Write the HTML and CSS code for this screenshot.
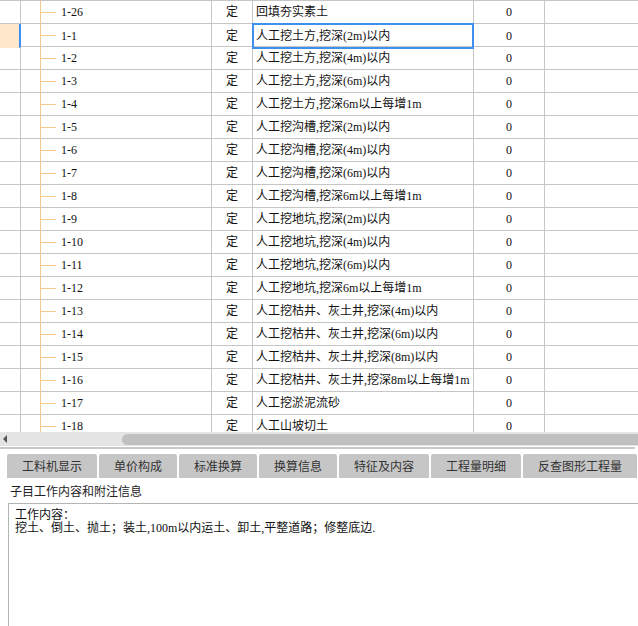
FILE: index.html
```html
<!DOCTYPE html>
<html lang="zh-CN">
<head>
<meta charset="utf-8">
<title>定额</title>
<link rel="stylesheet" href="styles.css">
</head>
<body>
<div class="grid">
  <div class="row"><div class="c0"></div><div class="c1 tree">1-26</div><div class="c2">定</div><div class="c3">回填夯实素土</div><div class="c4">0</div><div class="c5"></div></div>
  <div class="row sel"><div class="c0"></div><div class="c1 tree">1-1</div><div class="c2">定</div><div class="c3 focus">人工挖土方,挖深(2m)以内</div><div class="c4">0</div><div class="c5"></div></div>
  <div class="row"><div class="c0"></div><div class="c1 tree">1-2</div><div class="c2">定</div><div class="c3">人工挖土方,挖深(4m)以内</div><div class="c4">0</div><div class="c5"></div></div>
  <div class="row"><div class="c0"></div><div class="c1 tree">1-3</div><div class="c2">定</div><div class="c3">人工挖土方,挖深(6m)以内</div><div class="c4">0</div><div class="c5"></div></div>
  <div class="row"><div class="c0"></div><div class="c1 tree">1-4</div><div class="c2">定</div><div class="c3">人工挖土方,挖深6m以上每增1m</div><div class="c4">0</div><div class="c5"></div></div>
  <div class="row"><div class="c0"></div><div class="c1 tree">1-5</div><div class="c2">定</div><div class="c3">人工挖沟槽,挖深(2m)以内</div><div class="c4">0</div><div class="c5"></div></div>
  <div class="row"><div class="c0"></div><div class="c1 tree">1-6</div><div class="c2">定</div><div class="c3">人工挖沟槽,挖深(4m)以内</div><div class="c4">0</div><div class="c5"></div></div>
  <div class="row"><div class="c0"></div><div class="c1 tree">1-7</div><div class="c2">定</div><div class="c3">人工挖沟槽,挖深(6m)以内</div><div class="c4">0</div><div class="c5"></div></div>
  <div class="row"><div class="c0"></div><div class="c1 tree">1-8</div><div class="c2">定</div><div class="c3">人工挖沟槽,挖深6m以上每增1m</div><div class="c4">0</div><div class="c5"></div></div>
  <div class="row"><div class="c0"></div><div class="c1 tree">1-9</div><div class="c2">定</div><div class="c3">人工挖地坑,挖深(2m)以内</div><div class="c4">0</div><div class="c5"></div></div>
  <div class="row"><div class="c0"></div><div class="c1 tree">1-10</div><div class="c2">定</div><div class="c3">人工挖地坑,挖深(4m)以内</div><div class="c4">0</div><div class="c5"></div></div>
  <div class="row"><div class="c0"></div><div class="c1 tree">1-11</div><div class="c2">定</div><div class="c3">人工挖地坑,挖深(6m)以内</div><div class="c4">0</div><div class="c5"></div></div>
  <div class="row"><div class="c0"></div><div class="c1 tree">1-12</div><div class="c2">定</div><div class="c3">人工挖地坑,挖深6m以上每增1m</div><div class="c4">0</div><div class="c5"></div></div>
  <div class="row"><div class="c0"></div><div class="c1 tree">1-13</div><div class="c2">定</div><div class="c3">人工挖枯井、灰土井,挖深(4m)以内</div><div class="c4">0</div><div class="c5"></div></div>
  <div class="row"><div class="c0"></div><div class="c1 tree">1-14</div><div class="c2">定</div><div class="c3">人工挖枯井、灰土井,挖深(6m)以内</div><div class="c4">0</div><div class="c5"></div></div>
  <div class="row"><div class="c0"></div><div class="c1 tree">1-15</div><div class="c2">定</div><div class="c3">人工挖枯井、灰土井,挖深(8m)以内</div><div class="c4">0</div><div class="c5"></div></div>
  <div class="row"><div class="c0"></div><div class="c1 tree">1-16</div><div class="c2">定</div><div class="c3">人工挖枯井、灰土井,挖深8m以上每增1m</div><div class="c4">0</div><div class="c5"></div></div>
  <div class="row"><div class="c0"></div><div class="c1 tree">1-17</div><div class="c2">定</div><div class="c3">人工挖淤泥流砂</div><div class="c4">0</div><div class="c5"></div></div>
  <div class="row"><div class="c0"></div><div class="c1 tree">1-18</div><div class="c2">定</div><div class="c3">人工山坡切土</div><div class="c4">0</div><div class="c5"></div></div>
</div>
<div class="hscroll">
  <span class="arrow"></span>
  <span class="thumb"></span>
</div>
<div class="divider"></div>
<div class="tabs">
  <div class="tab">工料机显示</div>
  <div class="tab">单价构成</div>
  <div class="tab">标准换算</div>
  <div class="tab">换算信息</div>
  <div class="tab">特征及内容</div>
  <div class="tab">工程量明细</div>
  <div class="tab">反查图形工程量</div>
</div>
<div class="panel-title">子目工作内容和附注信息</div>
<div class="panel-box">
  <div>工作内容：</div>
  <div>挖土、倒土、抛土；装土,100m以内运土、卸土,平整道路；修整底边.</div>
</div>
</body>
</html>
```
FILE: styles.css
```css
html, body {
  margin: 0;
  padding: 0;
}
body {
  width: 638px;
  height: 626px;
  overflow: hidden;
  background: #ffffff;
  font-family: "Liberation Serif", "Noto Sans CJK SC", serif;
  font-size: 12px;
  color: #111;
}
.grid {
  height: 431px;
  overflow: hidden;
  border-top: 1px solid #c6c6c6;
}
.row {
  display: grid;
  grid-template-columns: 21px 191px 41px 221px 71px 1fr;
  height: 23px;
  box-sizing: border-box;
  border-bottom: 1px solid #c6c6c6;
}
.row > div {
  box-sizing: border-box;
  border-right: 1px solid #c6c6c6;
  display: flex;
  align-items: center;
  white-space: nowrap;
  overflow: visible;
  line-height: 22px;
}
.row > .c5 {
  border-right: none;
}
.c1 {
  padding-left: 40px;
  position: relative;
}
.tree::before {
  content: "";
  position: absolute;
  left: 19px;
  top: -1px;
  bottom: -1px;
  width: 1px;
  background: #f6c88c;
}
.tree::after {
  content: "";
  position: absolute;
  left: 20px;
  top: 11px;
  width: 15px;
  height: 1px;
  background: #f6c88c;
}
.c2, .c4 {
  justify-content: center;
}
.c3 {
  padding-left: 3px;
}
.sel .c0 {
  background: #fde8cb;
  border-right: 2px solid #3f8ff0;
}
.c3.focus {
  border: 2px solid #3f8ff0;
  margin: -1px 0 -1px -1px;
  padding-left: 2px;
  position: relative;
  z-index: 1;
}
.hscroll {
  height: 14px;
  background: #e4e4e4;
  display: flex;
  align-items: center;
}
.arrow {
  width: 0;
  height: 0;
  margin-left: 3px;
  border-top: 4px solid transparent;
  border-bottom: 4px solid transparent;
  border-right: 4px solid #555;
}
.thumb {
  margin-left: 115px;
  flex: 1;
  height: 11px;
  border-radius: 6px 0 0 6px;
  background: #c0c0c0;
}
.divider {
  height: 2px;
  margin-top: 1px;
  margin-right: 3px;
  background: #c8c8c8;
}
.tabs {
  display: flex;
  gap: 2px;
  padding-left: 7px;
  margin-top: 5px;
}
.tab {
  height: 24px;
  padding: 0 15px;
  background: #c6c6c6;
  border-radius: 2px 2px 0 0;
  font-family: "Noto Sans CJK SC", sans-serif;
  font-size: 12px;
  line-height: 24px;
  color: #333;
}
.panel-title {
  height: 25px;
  line-height: 25px;
  padding-left: 10px;
  font-family: "Noto Sans CJK SC", sans-serif;
  font-size: 12px;
  color: #222;
}
.panel-box {
  margin-left: 8px;
  border-top: 1px solid #b4b4b4;
  border-left: 1px solid #b4b4b4;
  height: 140px;
  padding: 5px 6px;
  line-height: 13px;
  font-size: 12px;
  color: #111;
}
```
